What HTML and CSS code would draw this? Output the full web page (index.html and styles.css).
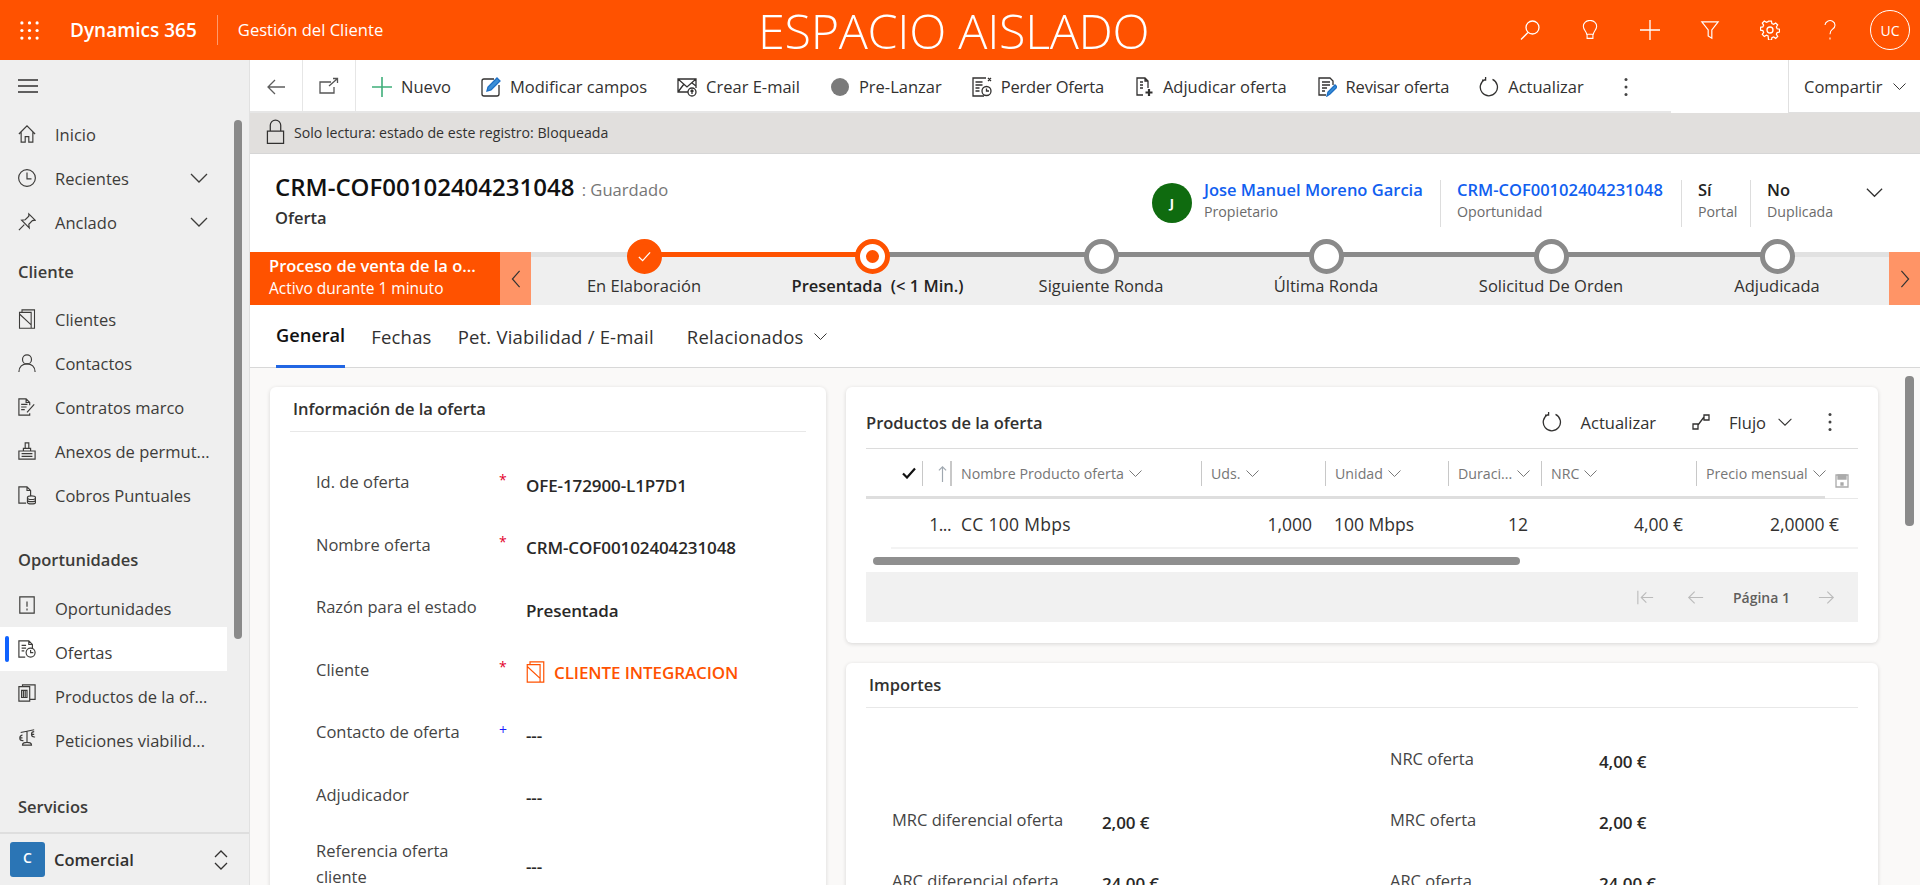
FILE: index.html
```html
<!DOCTYPE html>
<html lang="es">
  <head>
    <meta charset="UTF-8" />
    <title>Gestión del Cliente</title>
    <link rel="stylesheet" href="styles.css">
  </head>
  <body>
    <svg class="sprites" width="0" height="0">
      <symbol id="chev" viewBox="0 0 20 20"><path d="M2 6l8 8 8-8" /></symbol>
      <symbol id="refresh" viewBox="0 0 20 20"><path d="M6 2.5a8.6 8.6 0 1 0 7.5-.1M6.6 0v3.2H3" /></symbol>
      <symbol id="arrow" viewBox="0 0 20 20"><path d="M19 10H2M9 3l-7 7 7 7" /></symbol>
      <symbol id="folder" viewBox="0 0 20 24"><path d="M1 4h14v19H1zM4 4V1h15v22h-4M1 6l14 13" /></symbol>
      <symbol id="offer" viewBox="0 0 20 20"><path d="M8 19H1V1h11l4 4v4M12 1v4h4M4 6h5M4 9h5M4 12h3" /><circle cx="14" cy="14" r="5" /><path d="M14 11v3h3" /></symbol>
      <symbol id="dots" viewBox="0 0 4 20"><circle cx="2" cy="2.500" r="1.500" /><circle cx="2" cy="10" r="1.500" /><circle cx="2" cy="17.500" r="1.500" /></symbol>
    </svg>

    <header class="topbar">
      <div class="brand">
        <svg class="waffle" viewBox="0 0 20 20"><g fill="#fff"><circle cx="2" cy="2" r="1.7"/><circle cx="10" cy="2" r="1.7"/><circle cx="18" cy="2" r="1.7"/><circle cx="2" cy="10" r="1.7"/><circle cx="10" cy="10" r="1.7"/><circle cx="18" cy="10" r="1.7"/><circle cx="2" cy="18" r="1.7"/><circle cx="10" cy="18" r="1.7"/><circle cx="18" cy="18" r="1.7"/></g></svg>
        <span class="brand-name">Dynamics 365</span>
        <span class="brand-app">Gestión del Cliente</span>
      </div>
      <div class="sandbox">ESPACIO AISLADO</div>
      <div class="top-actions">
        <span class="top-btn"><svg class="i20" viewBox="0 0 20 20"><circle cx="12.5" cy="7.5" r="6.5"/><path d="M8 12.5L1 19.5"/></svg></span>
        <span class="top-btn"><svg class="i20" viewBox="0 0 20 24"><path d="M6 17c0-3-4-5-4-9.500a8 7 0 0 1 16 0C18 12 14 14 14 17zM6.500 17v5h7v-5"/></svg></span>
        <span class="top-btn"><svg class="i20" viewBox="0 0 20 20"><path d="M10 0v20M0 10h20"/></svg></span>
        <span class="top-btn"><svg class="i20" viewBox="0 0 20 22"><path d="M1 2h18l-7 9v9l-4-2.500V11z"/></svg></span>
        <span class="top-btn"><svg class="i20" viewBox="0 0 20 20"><circle cx="10" cy="10" r="3"/><path d="M8.500 1h3l.5 2.500 1.800.8 2.200-1.400 2.100 2.100-1.400 2.200.8 1.800 2.500.5v3l-2.500.5-.8 1.800 1.400 2.200-2.100 2.100-2.200-1.400-1.800.8-.5 2.500h-3L8 16.500l-1.800-.8L4 17.100 1.900 15l1.400-2.200-.8-1.800L0 10.500v-3l2.500-.5.8-1.800L1.900 3 4 .9l2.200 1.400L8 1.500z" transform="translate(.5 .2) scale(.95)"/></svg></span>
        <span class="top-btn"><svg class="i20" viewBox="0 0 20 24"><path d="M4 6a6 5.500 0 1 1 9 5c-2 1.500-3 3-3 6M10 21v2.500"/></svg></span>
        <span class="top-btn"><span class="avatar">UC</span></span>
      </div>
    </header>

    <div class="shell">
      <nav class="sidebar">
        <div class="burger"><svg class="i20" viewBox="0 0 20 14"><path d="M0 1h20M0 7h20M0 13h20"/></svg></div>
        <div class="nav-list">
          <a class="nav-item"><svg viewBox="0 0 20 20"><path d="M1 10l9-9 9 9M3.500 8v11h4.500v-6h4v6h4.500V8"/></svg>Inicio</a>
          <a class="nav-item"><svg viewBox="0 0 20 20"><circle cx="10" cy="10" r="9.300"/><path d="M10 4v7h5"/></svg>Recientes<svg class="nav-chev"><use href="#chev"/></svg></a>
          <a class="nav-item"><svg viewBox="0 0 20 20"><path d="M12 1l7 7-3 .5-4 4 .5 4L4 8l4-.5 4-4zM7 13l-6 6"/></svg>Anclado<svg class="nav-chev"><use href="#chev"/></svg></a>
        </div>
        <h3 class="nav-head">Cliente</h3>
        <div class="nav-list">
          <a class="nav-item"><svg><use href="#folder"/></svg>Clientes</a>
          <a class="nav-item"><svg viewBox="0 0 20 20"><circle cx="10" cy="6" r="5"/><path d="M1 20c0-6 4-9 9-9s9 3 9 9"/></svg>Contactos</a>
          <a class="nav-item"><svg viewBox="0 0 20 20"><path d="M13 8V5L9 1H1v18h12v-2M9 1v4h4M3.500 7h7M3.500 10h6M3.500 13h4M10 16l8-9"/></svg>Contratos marco</a>
          <a class="nav-item"><svg viewBox="0 0 20 20"><path d="M8 1h4v6H8zM6 7h8v3H6zM1 10h18v9H1zM4 13h12M4 16h12"/></svg>Anexos de permut...</a>
          <a class="nav-item"><svg viewBox="0 0 20 20"><path d="M9 19H1V1h9l4 4v6M10 1v4h4"/><ellipse cx="15" cy="13" rx="4.500" ry="2"/><path d="M10.500 13v5c0 2.500 9 2.500 9 0v-5M10.500 15.500c0 2.500 9 2.500 9 0"/></svg>Cobros Puntuales</a>
        </div>
        <h3 class="nav-head nav-head-op">Oportunidades</h3>
        <div class="nav-list nav-list-op">
          <a class="nav-item"><svg viewBox="0 0 20 20"><path d="M2 1h16v18H2zM10 6v6M10 14v2"/></svg>Oportunidades</a>
          <a class="nav-item active"><svg><use href="#offer"/></svg>Ofertas</a>
          <a class="nav-item"><svg viewBox="0 0 20 20"><path d="M1 3h12v16H1zM5 3V1h14v16h-6M4 7h6v8H4z"/><path d="M6 7v8M8 7v8"/></svg>Productos de la of...</a>
          <a class="nav-item"><svg viewBox="0 0 20 20"><path d="M10 3v13M3 5l15-3M5 19c0-2 2-3 5-3s5 1 5 3zM5 8a3 3 0 1 0 0 6h1M5 11h-3M18 4a3 3 0 1 0 0 6h1M18 7h-3"/></svg>Peticiones viabilid...</a>
        </div>
        <h3 class="nav-head nav-head-sv">Servicios</h3>
        <div class="area">
          <span class="area-box">C</span>
          <span class="area-name">Comercial</span>
          <svg class="area-arrows" viewBox="0 0 14 22"><path d="M1 8l6-6 6 6M1 14l6 6 6-6"/></svg>
        </div>
        <span class="scroll side-scroll"></span>
      </nav>

      <main class="main">
        <div class="cmdbar">
          <span class="cmd-back"><svg class="i20" viewBox="0 0 20 20"><use href="#arrow"/></svg></span>
          <span class="cmd-pop"><svg class="i20" viewBox="0 0 20 20"><path d="M12 5H1v11h14v-6M10 9l8-7M14 1.500h4.500V6"/></svg></span>
          <div class="cmd-items">
            <a class="cmd"><svg class="plus" viewBox="0 0 20 20"><path d="M10 0v20M0 10h20"/></svg>Nuevo</a>
            <a class="cmd"><svg viewBox="0 0 20 20"><path d="M13 2H3a2 2 0 0 0-2 2v13a2 2 0 0 0 2 2h13a2 2 0 0 0 2-2V8"/><path class="blue" d="M6 14l1-4 9-9 3 3-9 9z"/></svg>Modificar campos</a>
            <a class="cmd"><svg viewBox="0 0 20 20"><path d="M11 15H1V2h18v9M1 2l9 8 9-8M1 15l6-8M19 9l-4-3"/><circle cx="15" cy="15" r="4"/><path d="M15 17v-4M13.500 14.500l1.500-1.500 1.500 1.500"/></svg>Crear E-mail</a>
            <a class="cmd"><svg viewBox="0 0 20 20"><circle class="solid" cx="10" cy="10" r="9"/></svg>Pre-Lanzar</a>
            <a class="cmd cmd-tight"><svg viewBox="0 0 20 20"><path d="M14 1H1v18h11M3.500 5h7M3.500 8h7M3.500 11h4M3.500 14h4M16 1l3 3M19 1l-3 3"/><circle cx="14.500" cy="14" r="4.500"/><path d="M14.500 11.500V14h2.500"/></svg>Perder Oferta</a>
            <a class="cmd"><svg viewBox="0 0 20 20"><path d="M9 18H3V1h8l3 3v7M11 1v3h3M6 5h3M6 8h3M6 11h3"/><path class="thick" d="M15 12v7M11.500 15.500h7"/></svg>Adjudicar oferta</a>
            <a class="cmd cmd-tight"><svg viewBox="0 0 20 20"><path d="M9 18H2V1h11l3 3v4M5 5h8M5 8h8M5 11h5M5 14h3"/><path class="blue" d="M10 19l1-4 7-7 2 2-7 7z"/></svg>Revisar oferta</a>
            <a class="cmd"><svg viewBox="0 0 20 20"><use href="#refresh"/></svg>Actualizar</a>
            <svg class="dots cmd-dots"><use href="#dots"/></svg>
          </div>
          <a class="cmd-share">Compartir<svg><use href="#chev"/></svg></a>
        </div>

        <div class="notice">
          <svg viewBox="0 0 20 26"><path d="M1.500 12h17v13h-17zM4.500 12V6a5.500 5.500 0 0 1 11 0v6"/></svg>
          Solo lectura: estado de este registro: Bloqueada
        </div>

        <section class="record">
          <div class="record-title">
            <h1>CRM-COF00102404231048<span class="saved"> : Guardado</span></h1>
            <div class="record-type">Oferta</div>
          </div>
          <div class="record-fields">
            <span class="owner-pic">J</span>
            <div class="field owner"><a>Jose Manuel Moreno Garcia</a><small>Propietario</small></div>
            <div class="field opp"><a>CRM-COF00102404231048</a><small>Oportunidad</small></div>
            <div class="field portal"><b>Sí</b><small>Portal</small></div>
            <div class="field dup"><b>No</b><small>Duplicada</small></div>
            <svg class="record-chev"><use href="#chev"/></svg>
          </div>
        </section>

        <section class="bpf">
          <div class="bpf-name"><b>Proceso de venta de la o...</b><span>Activo durante 1 minuto</span></div>
          <span class="bpf-nav"><svg viewBox="0 0 10 20"><path d="M9 1L1 10l8 9"/></svg></span>
          <ol class="bpf-steps">
            <li class="step done"><span class="node"><svg viewBox="0 0 16 16"><path d="M2 8.500l4 4 8-9"/></svg></span>En Elaboración</li>
            <li class="step current"><span class="node"><i></i></span><span class="step-label"><b>Presentada</b>&nbsp; <b>(&lt; 1 Min.)</b></span></li>
            <li class="step"><span class="node"></span>Siguiente Ronda</li>
            <li class="step"><span class="node"></span>Última Ronda</li>
            <li class="step"><span class="node"></span>Solicitud De Orden</li>
            <li class="step"><span class="node"></span>Adjudicada</li>
          </ol>
          <span class="bpf-nav"><svg viewBox="0 0 10 20"><path d="M1 1l8 9-8 9"/></svg></span>
        </section>

        <div class="tabs">
          <a class="tab selected">General</a>
          <a class="tab">Fechas</a>
          <a class="tab">Pet. Viabilidad / E-mail</a>
          <a class="tab tab-more">Relacionados<svg><use href="#chev"/></svg></a>
        </div>

        <div class="content">
          <section class="card info">
            <h2 class="card-title">Información de la oferta</h2>
            <div class="form">
              <div class="form-row"><label>Id. de oferta</label><em>*</em><strong>OFE-172900-L1P7D1</strong></div>
              <div class="form-row"><label>Nombre oferta</label><em>*</em><strong>CRM-COF00102404231048</strong></div>
              <div class="form-row"><label>Razón para el estado</label><span></span><strong>Presentada</strong></div>
              <div class="form-row"><label>Cliente</label><em>*</em><strong class="lookup"><svg><use href="#folder"/></svg>CLIENTE INTEGRACION</strong></div>
              <div class="form-row"><label>Contacto de oferta</label><em class="rec">+</em><strong>---</strong></div>
              <div class="form-row"><label>Adjudicador</label><span></span><strong>---</strong></div>
              <div class="form-row tall"><label>Referencia oferta cliente</label><span></span><strong>---</strong></div>
            </div>
          </section>

          <div class="side-col">
            <section class="card products">
              <div class="grid-head">
                <h2>Productos de la oferta</h2>
                <a class="grid-cmd"><svg><use href="#refresh"/></svg>Actualizar</a>
                <a class="grid-cmd flow"><svg viewBox="0 0 20 20"><path d="M2 12h5v5H2zM13 3h5v5h-5zM7 13l6-8"/></svg>Flujo<svg class="flow-chev"><use href="#chev"/></svg></a>
                <svg class="dots grid-dots"><use href="#dots"/></svg>
              </div>
              <div class="grid-cols">
                <span class="col-check"><svg viewBox="0 0 14 12"><path d="M1 6.500l4 4 8-9"/></svg></span>
                <span class="col col-sort"><svg viewBox="0 0 10 20"><path d="M5 19V2M1 6l4-4 4 4"/></svg></span>
                <span class="col">Nombre Producto oferta<svg><use href="#chev"/></svg></span>
                <span class="col">Uds.<svg><use href="#chev"/></svg></span>
                <span class="col">Unidad<svg><use href="#chev"/></svg></span>
                <span class="col">Duraci...<svg><use href="#chev"/></svg></span>
                <span class="col">NRC<svg><use href="#chev"/></svg></span>
                <span class="col">Precio mensual<svg><use href="#chev"/></svg></span>
                <span class="col-save"><svg viewBox="0 0 14 14"><path d="M1 1h12v12H1z"/><path class="save-bar" d="M3 1h8v4H3z"/><path class="save-dot" d="M6 9h2v2H6z"/></svg></span>
              </div>
              <div class="grid-row">
                <span></span>
                <span class="cell-num">1...</span>
                <span class="cell cell-name">CC 100 Mbps</span>
                <span class="cell right">1,000</span>
                <span class="cell">100 Mbps</span>
                <span class="cell right">12</span>
                <span class="cell right">4,00 €</span>
                <span class="cell right last">2,0000 €</span>
              </div>
              <div class="hscroll"><span></span></div>
              <div class="pager">
                <svg class="pager-ico" viewBox="0 0 20 20"><path d="M1 2v16M19 10H5M11 4l-6 6 6 6"/></svg>
                <svg class="pager-ico prev"><use href="#arrow"/></svg>
                <span>Página 1</span>
                <svg class="pager-ico next"><use href="#arrow"/></svg>
              </div>
            </section>

            <section class="card amounts">
              <h2 class="card-title">Importes</h2>
              <div class="amount-grid">
                <span></span><span></span>
                <label>NRC oferta</label><strong>4,00 €</strong>
                <label>MRC diferencial oferta</label><strong>2,00 €</strong>
                <label>MRC oferta</label><strong>2,00 €</strong>
                <label>ARC diferencial oferta</label><strong>24,00 €</strong>
                <label>ARC oferta</label><strong>24,00 €</strong>
              </div>
            </section>
          </div>
          <span class="scroll main-scroll"></span>
        </div>
      </main>
    </div>
  </body>
</html>
```

FILE: styles.css
```css
html,
body {
  height: 100%;
  margin: 0;
  overflow: hidden;
}
body {
  display: flex;
  flex-direction: column;
  font-family: "Open Sans", "Liberation Sans", sans-serif;
  font-size: 16px;
  color: #323130;
  background: #fff;
}
svg {
  fill: none;
  stroke: currentColor;
  stroke-width: 1.3;
  flex: none;
}
.sprites {
  position: absolute;
}
.i20 {
  width: 20px;
  height: 20px;
}
.dots {
  width: 4px;
  height: 20px;
  fill: #444;
  stroke: none;
}

/* top bar */
.topbar {
  display: flex;
  align-items: center;
  height: 60px;
  flex: none;
  background: #ff5200;
  color: #fff;
}
.brand {
  display: flex;
  align-items: center;
  width: 758px;
}
.waffle {
  width: 19px;
  height: 19px;
  margin-left: 20px;
  stroke: none;
}
.brand-name {
  margin-left: 31px;
  font-size: 19px;
  font-weight: 600;
}
.brand-app {
  margin-left: 20px;
  padding-left: 20px;
  border-left: 1px solid #ff9a6b;
  line-height: 30px;
  font-size: 16.600px;
}
.sandbox {
  font-size: 48.500px;
  font-weight: 300;
  letter-spacing: -0.3px;
  white-space: nowrap;
  line-height: 60px;
}
.top-actions {
  display: flex;
  margin-left: auto;
}
.top-btn {
  display: flex;
  align-items: center;
  justify-content: center;
  width: 60px;
  height: 60px;
}
.avatar {
  display: flex;
  align-items: center;
  justify-content: center;
  width: 38px;
  height: 38px;
  border: 1px solid #fff;
  border-radius: 50%;
  font-size: 14px;
}

.shell {
  display: flex;
  flex: 1;
  min-height: 0;
}

/* left nav */
.sidebar {
  position: relative;
  display: flex;
  flex-direction: column;
  width: 250px;
  flex: none;
  box-sizing: border-box;
  background: #efefef;
  border-right: 1px solid #e1e1e1;
}
.burger {
  display: flex;
  align-items: center;
  height: 52px;
  padding-left: 18px;
  flex: none;
}
.burger svg {
  height: 14px;
}
.nav-list {
  display: flex;
  flex-direction: column;
}
.nav-item {
  display: flex;
  align-items: center;
  width: 227px;
  height: 44px;
  box-sizing: border-box;
  padding-left: 18px;
  position: relative;
  font-size: 16.500px;
  color: #3d3c3a;
  white-space: nowrap;
}
.nav-list-op .nav-item {
  padding-top: 6px;
}
.nav-item > svg:first-child {
  width: 18px;
  height: 20px;
  margin-right: 19px;
}
.nav-list-op .nav-item > svg:first-child {
  margin-top: -6px;
}
.nav-item .nav-chev {
  width: 20px;
  height: 20px;
  margin-left: auto;
  margin-right: 18px;
}
.nav-item.active {
  background: #fff;
}
.nav-item.active::before {
  content: "";
  position: absolute;
  left: 5px;
  top: 9px;
  width: 4px;
  height: 26px;
  background: #0f62fe;
  border-radius: 2px;
}
.nav-head {
  margin: 0;
  padding: 17px 0 5px 18px;
  height: 33px;
  line-height: 22px;
  font-size: 16.500px;
  font-weight: 600;
  color: #3d3c3a;
}
.nav-head-op {
  margin-top: 15px;
  padding-bottom: 3px;
}
.nav-head-sv {
  margin-top: 20px;
}
.area {
  display: flex;
  align-items: center;
  margin-top: auto;
  height: 53px;
  flex: none;
  box-sizing: border-box;
  padding-left: 10px;
  border-top: 2px solid #dedede;
}
.area-box {
  display: flex;
  justify-content: center;
  padding-top: 6px;
  box-sizing: border-box;
  width: 35px;
  height: 35px;
  background: #2b75b5;
  border-radius: 3px;
  color: #fff;
  font-size: 14px;
  font-weight: 600;
}
.area-name {
  margin-left: 9px;
  font-size: 16.500px;
  font-weight: 600;
}
.area-arrows {
  width: 14px;
  height: 22px;
  margin-left: auto;
  margin-right: 21px;
}
.scroll {
  position: absolute;
  width: 8px;
  background: #8a8a8a;
  border-radius: 4px;
}
.side-scroll {
  left: 234px;
  top: 60px;
  height: 519px;
}

/* command bar */
.main {
  display: flex;
  flex-direction: column;
  flex: 1;
  min-width: 0;
}
.cmdbar {
  display: flex;
  align-items: stretch;
  height: 53px;
  flex: none;
  box-sizing: border-box;
  background: linear-gradient(#e6e6e6, #e6e6e6) left bottom / 1421px 2px no-repeat;
}
.cmd-back {
  display: flex;
  align-items: center;
  justify-content: center;
  width: 52px;
  color: #5e5e5e;
}
.cmd-pop {
  display: flex;
  align-items: center;
  justify-content: center;
  width: 52px;
  height: 53px;
  border-left: 1px solid #e6e6e6;
  border-right: 1px solid #e6e6e6;
  color: #555;
}
.cmd-items {
  display: flex;
  align-items: center;
  gap: 30px;
  padding-left: 16px;
  flex: 1;
}
.cmd {
  display: flex;
  align-items: center;
  gap: 9px;
  font-size: 16.500px;
  white-space: nowrap;
}
.cmd-tight {
  letter-spacing: -0.2px;
}
.cmd svg {
  width: 20px;
  height: 20px;
}
.plus {
  stroke: #3fae7a;
  stroke-width: 1.600;
}
.blue {
  stroke: #1d6fc4;
  fill: #3a8fd8;
}
.solid {
  fill: #7a7a7a;
  stroke: none;
}
.thick {
  stroke-width: 2.2;
}
.cmd-dots {
  margin-left: 10px;
}
.cmd-share {
  display: flex;
  align-items: center;
  width: 132px;
  flex: none;
  padding-left: 15px;
  box-sizing: border-box;
  border-left: 1px solid #e0e0e0;
  border-bottom: 1px solid #e0e0e0;
  font-size: 16.500px;
  white-space: nowrap;
}
.cmd-share svg {
  width: 15px;
  height: 15px;
  margin-left: 10px;
}
.notice {
  display: flex;
  align-items: center;
  gap: 9px;
  height: 41px;
  flex: none;
  box-sizing: border-box;
  padding: 0 0 2px 16px;
  background: #e1dfdd;
  border-bottom: 1px solid #d6d6d6;
  font-size: 14.150px;
}
.notice svg {
  width: 19px;
  height: 26px;
}

/* record header */
.record {
  display: flex;
  justify-content: space-between;
  height: 98px;
  flex: none;
  box-sizing: border-box;
  padding-left: 25px;
}
.record h1 {
  margin: 16px 0 0;
  font-size: 24px;
  font-weight: 600;
  line-height: 34px;
  color: #111;
}
.saved {
  margin-left: 3px;
  font-size: 16.600px;
  font-weight: 400;
  color: #767676;
}
.record-type {
  margin-top: -1px;
  font-size: 16.500px;
  font-weight: 600;
  color: #333;
}
.record-fields {
  display: flex;
  align-items: flex-start;
  padding-top: 26px;
}
.owner-pic {
  display: flex;
  align-items: center;
  justify-content: center;
  width: 40px;
  height: 40px;
  margin-top: 3px;
  margin-right: 12px;
  border-radius: 50%;
  background: #0f6b0f;
  color: #fff;
  font-size: 13px;
  font-weight: 700;
}
.field {
  display: flex;
  flex-direction: column;
  height: 47px;
  padding: 0 16px;
  border-left: 1px solid #ddd;
  box-sizing: border-box;
  line-height: 20px;
  white-space: nowrap;
}
.field a {
  color: #1160f0;
  font-size: 16.500px;
  font-weight: 600;
}
.field b {
  font-size: 16.500px;
  font-weight: 600;
  color: #222;
}
.field small {
  font-size: 14.200px;
  line-height: 24px;
  color: #6b6b6b;
}
.owner {
  width: 236px;
  padding-left: 0;
  border-left: 0;
}
.opp {
  width: 241px;
}
.portal {
  width: 69px;
}
.dup {
  width: 115px;
}
.record-chev {
  width: 19px;
  height: 19px;
  margin-top: 3px;
  margin-right: 36px;
}

/* business process flow */
.bpf {
  display: flex;
  height: 53px;
  flex: none;
}
.bpf-name {
  display: flex;
  flex-direction: column;
  justify-content: center;
  width: 250px;
  box-sizing: border-box;
  padding: 0 0 4px 19px;
  background: #ff5200;
  color: #fff;
  font-size: 15.500px;
  line-height: 22px;
  white-space: nowrap;
}
.bpf-name b {
  font-weight: 600;
  font-size: 16.500px;
}
.bpf-nav {
  display: flex;
  align-items: center;
  justify-content: center;
  width: 31px;
  background: #ff9466;
  color: #333;
}
.bpf-nav svg {
  width: 10px;
  height: 18px;
}
.bpf-steps {
  display: grid;
  grid-template-columns: 226px 230px 228px 222px 228px 224px;
  margin: 0;
  padding: 0;
  list-style: none;
  background-color: #efefef;
  background-image: linear-gradient(90deg, #e1e1e1 113px, #ff5200 113px 341px, #8a8a8a 341px 1245px, #e1e1e1 1245px);
  background-size: 100% 5px;
  background-repeat: no-repeat;
}
.step {
  display: flex;
  flex-direction: column;
  align-items: center;
  margin-top: -13px;
  font-size: 16.500px;
  white-space: nowrap;
}
.step b {
  font-weight: 600;
  color: #222;
}
.step-label {
  margin-left: 11px;
}
.node {
  display: flex;
  align-items: center;
  justify-content: center;
  width: 35px;
  height: 35px;
  box-sizing: border-box;
  border: 5px solid #8a8a8a;
  border-radius: 50%;
  background: #fff;
}
.done .node {
  background: #ff5200;
  border-color: #ff5200;
  color: #fff;
}
.done svg {
  width: 15px;
  height: 15px;
}
.current .node {
  border-color: #ff5200;
}
.current .node i {
  width: 13px;
  height: 13px;
  border-radius: 50%;
  background: #ff5200;
}

/* tabs */
.tabs {
  display: flex;
  gap: 26px;
  height: 63px;
  flex: none;
  box-sizing: border-box;
  padding-left: 26px;
  border-bottom: 1px solid #d8d8d8;
}
.tab {
  display: flex;
  align-items: center;
  gap: 9px;
  height: 63px;
  box-sizing: border-box;
  font-size: 18.500px;
  letter-spacing: 0.2px;
  white-space: nowrap;
}
.tab svg {
  width: 15px;
  height: 15px;
}
.tab.selected {
  font-size: 18.200px;
  letter-spacing: 0;
  font-weight: 600;
  color: #111;
  border-bottom: 3px solid #2266e3;
}
.tab-more {
  margin-left: 7px;
}

/* content */
.content {
  position: relative;
  display: grid;
  grid-template-columns: 556px 1032px;
  gap: 20px;
  flex: 1;
  min-height: 0;
  overflow: hidden;
  padding: 19px 0 0 20px;
  background: #faf9f8;
}
.card {
  background: #fff;
  border-radius: 6px;
  box-shadow: 0 1px 4px rgba(0, 0, 0, 0.14);
  padding: 0 20px;
}
.card-title {
  margin: 0;
  height: 45px;
  box-sizing: border-box;
  padding: 10px 0 0 3px;
  border-bottom: 1px solid #e8e8e8;
  font-size: 16.500px;
  font-weight: 600;
  line-height: 24px;
}
.info {
  min-height: 600px;
}
.form {
  padding: 19px 0 0 26px;
}
.form-row {
  display: grid;
  grid-template-columns: 179px 31px 1fr;
  align-items: center;
  height: 62.500px;
}
.form-row label,
.amount-grid label {
  font-size: 16.500px;
  color: #444;
  line-height: 26px;
}
.form-row strong,
.amount-grid strong {
  margin-top: 6px;
  font-size: 17px;
  font-weight: 600;
  letter-spacing: -0.1px;
  color: #292827;
  white-space: nowrap;
}
.form-row em {
  margin: -6px 0 0 4px;
  font-style: normal;
  font-size: 14px;
  color: #e3002b;
}
.form-row em.rec {
  color: #1a1aff;
}
.form-row .lookup {
  display: flex;
  align-items: center;
  gap: 9px;
  color: #ff5200;
}
.lookup svg {
  width: 19px;
  height: 22px;
  margin-top: -2px;
}
.form-row.tall {
  height: 75px;
}
.side-col {
  display: flex;
  flex-direction: column;
  gap: 20px;
  min-width: 0;
}
.products {
  height: 256px;
  box-sizing: border-box;
  flex: none;
}
.grid-head {
  display: flex;
  align-items: center;
  height: 62px;
  box-sizing: border-box;
  padding-top: 9px;
  border-bottom: 1px solid #dcdcdc;
}
.grid-head h2 {
  margin: 0 auto 0 0;
  font-size: 16.500px;
  font-weight: 600;
}
.grid-cmd {
  display: flex;
  align-items: center;
  gap: 19px;
  font-size: 16.500px;
}
.grid-cmd svg {
  width: 20px;
  height: 20px;
}
.flow {
  margin-left: 35px;
  gap: 18px;
}
.grid-cmd .flow-chev {
  width: 16px;
  height: 16px;
  margin-left: -7px;
}
.grid-dots {
  margin: 0 26px 0 35px;
}
.grid-cols,
.grid-row {
  display: grid;
  grid-template-columns: 56px 29px 250px 124px 123px 93px 155px 129px 33px;
  align-items: center;
}
.grid-cols {
  height: 50px;
  box-sizing: border-box;
  padding-bottom: 1px;
  background: linear-gradient(#dedede, #dedede) left bottom / 959px 3px no-repeat, linear-gradient(#e8e8e8, #e8e8e8) left bottom / 100% 1px no-repeat;
}
.col-check {
  justify-self: end;
  padding-right: 6px;
  height: 13px;
  line-height: 0;
  color: #111;
}
.col-check svg {
  width: 14px;
  height: 12px;
  stroke-width: 2.200;
}
.col {
  display: flex;
  align-items: center;
  gap: 4px;
  height: 25px;
  padding-left: 9px;
  border-left: 1px solid #c8c8c8;
  font-size: 14.200px;
  color: #767676;
  white-space: nowrap;
  min-width: 0;
}
.col svg {
  width: 15px;
  height: 15px;
}
.col-sort {
  padding-left: 15px;
  color: #a0a8b0;
  border-right: 1px solid #c8c8c8;
}
.col-sort svg {
  width: 9px;
  height: 18px;
}
.col-save {
  display: flex;
  justify-content: flex-end;
  padding: 14px 9px 0 0;
}
.col-save svg {
  width: 14px;
  height: 14px;
  stroke: #aaa;
}
.save-bar {
  fill: #aaa;
}
.save-dot {
  fill: #aaa;
}
.grid-row {
  height: 50px;
  box-sizing: border-box;
  padding-bottom: 1px;
  background: linear-gradient(#f3f3f3, #f3f3f3) 25px 100% / 967px 2px no-repeat;
  font-size: 17.500px;
}
.cell-num {
  justify-self: end;
  letter-spacing: -0.5px;
}
.cell {
  padding: 0 9px;
  white-space: nowrap;
}
.cell-name {
  padding-left: 10px;
  letter-spacing: 0.3px;
}
.right {
  text-align: right;
  padding-right: 13px;
}
.last {
  grid-column: span 2;
  padding-right: 19px;
}
.hscroll {
  padding: 8px 0 0 7px;
  height: 15px;
}
.hscroll span {
  display: block;
  width: 647px;
  height: 8px;
  background: #8f8f8f;
  border-radius: 4px;
}
.pager {
  display: flex;
  align-items: center;
  justify-content: flex-end;
  height: 50px;
  padding-right: 23px;
  background: #f1f1f1;
  color: #bbb;
}
.pager span {
  margin: 0 28px 0 29px;
  font-size: 14px;
  font-weight: 600;
  color: #605e5c;
}
.pager-ico {
  width: 17px;
  height: 17px;
}
.pager-ico.prev {
  margin-left: 33px;
}
.pager-ico.next {
  transform: scaleX(-1);
}
.amounts {
  min-height: 300px;
}
.amount-grid {
  display: grid;
  grid-template-columns: 210px 288px 209px 1fr;
  grid-auto-rows: 61px;
  align-items: center;
  padding: 20px 0 0 26px;
}
.main-scroll {
  right: 6px;
  top: 8px;
  width: 9px;
  height: 150px;
}
```
